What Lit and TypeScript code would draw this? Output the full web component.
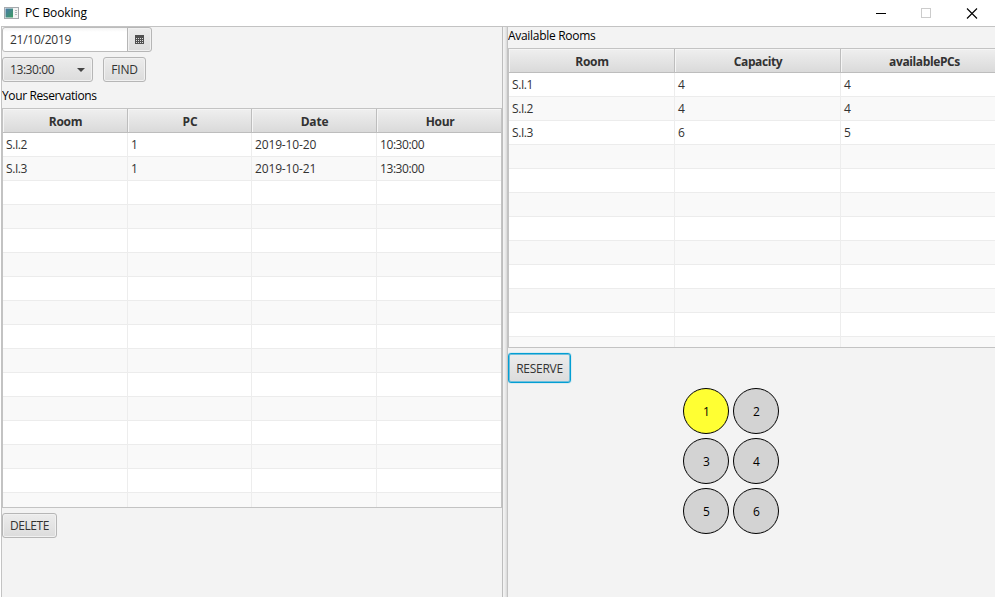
import { LitElement, html, css, svg } from "lit";
import { customElement, property } from "lit/decorators.js";
import { classMap } from "lit/directives/class-map.js";

@customElement("data-table")
class DataTable extends LitElement {
  @property({ attribute: false }) columns: { title: string; width: number; spacing: number }[] = [];
  @property({ attribute: false }) rows: string[][] = [];
  @property({ type: Number }) slots = 16;

  static styles = css`
    :host {
      display: block;
      box-sizing: border-box;
      overflow: hidden;
      background: #fff;
      border: 1px solid #c3c3c3;
      color: #323232;
    }
    .row { display: flex; height: 24px; width: max-content; background: #fff; }
    .row.odd { background: #f9f9f9; }
    .cell {
      box-sizing: border-box;
      flex: none;
      height: 24px;
      padding-left: 3px;
      line-height: 24px;
      border-right: 1px solid #ededed;
      border-bottom: 1px solid #ececec;
      letter-spacing: -0.42px;
      white-space: nowrap;
    }
    .cell.dated { letter-spacing: -0.15px; }
    .header { background: linear-gradient(#efefef, #d9d9d9); }
    .header .cell {
      padding: 0 0 0 1px;
      text-align: center;
      font-weight: 700;
      line-height: 25px;
      border-right-color: #bdbdbd;
      border-bottom-color: #bdbdbd;
      box-shadow: inset 1px 1px 0 #f5f5f5;
    }
  `;

  render() {
    const slots = Array.from({ length: this.slots }, (_, i) => this.rows[i] ?? []);
    return html`
      <div class="row header">
        ${this.columns.map((c) => html`<div class="cell" style="width:${c.width}px;letter-spacing:${c.spacing}px">${c.title}</div>`)}
      </div>
      ${slots.map(
        (r, i) => html`<div class=${classMap({ row: true, odd: i % 2 === 1 })}>
          ${this.columns.map((c, j) => html`<div class=${classMap({ cell: true, dated: c.title === "Date" })} style="width:${c.width}px">${r[j] ?? ""}</div>`)}
        </div>`
      )}
    `;
  }
}

@customElement("app-root")
class AppRoot extends LitElement {
  static styles = css`
    :host {
      display: flex;
      flex-direction: column;
      width: 996px;
      height: 598px;
      overflow: hidden;
      background: #fff;
      color: #000;
      font: 12px/16px "Open Sans", "Noto Sans", sans-serif;
    }
    .titlebar { display: flex; height: 26px; align-items: center; padding-left: 4px; box-sizing: border-box; flex: none; }
    .title { margin-left: 6px; letter-spacing: -0.14px; flex: 1; }
    svg { display: block; flex: none; }
    .split { display: flex; height: 571px; margin: 0 1px; background: #f3f3f3; }
    .pane { box-sizing: border-box; height: 571px; border-top: 1px solid #c3c3c3; border-left: 1px solid #c3c3c3; overflow: hidden; }
    .left { width: 502px; border-right: 1px solid #bdbdbd; }
    .divider { width: 4px; border-top: 1px solid #c3c3c3; box-sizing: border-box; background: linear-gradient(90deg, #f4f4f4, #ececec 50%, #d8d8d8); }
    .right { width: 488px; }
    .label { letter-spacing: -0.38px; white-space: nowrap; }
    .rooms-label { letter-spacing: -0.3px; }
    .button, .combo {
      box-sizing: border-box;
      height: 25px;
      border: 1px solid #b6b6b6;
      border-radius: 3px;
      background: linear-gradient(#ececec, #dcdcdc);
      box-shadow: inset 0 0 0 1px #f1f1f1;
      color: #333;
      line-height: 24px;
      text-align: center;
      letter-spacing: -0.42px;
    }
    .date { display: flex; width: 150px; height: 25px; }
    .field {
      box-sizing: border-box;
      width: 126px;
      border: 1px solid #bcbcbc;
      border-radius: 3px 0 0 3px;
      background: linear-gradient(#f4f4f4, #fff 4px);
      padding-left: 7px;
      line-height: 24px;
      color: #323232;
      letter-spacing: -0.25px;
    }
    .calendar { width: 25px; margin-left: -1px; border-radius: 0 3px 3px 0; display: flex; align-items: center; justify-content: center; }
    .filters { display: flex; gap: 10px; margin-top: 5px; }
    .combo { width: 91px; display: flex; align-items: center; justify-content: space-between; padding: 0 7px; }
    .find { width: 43px; letter-spacing: -0.25px; }
    .reservations-label { margin-top: 6px; height: 16px; }
    .reservations { width: 500px; height: 400px; margin-top: 4px; }
    .delete { width: 55px; margin-top: 5px; letter-spacing: -0.42px; }
    .rooms-label { padding-top: 1px; height: 20px; }
    .rooms { width: 500px; height: 300px; }
    .reserve {
      width: 63px;
      height: 30px;
      margin-top: 5px;
      line-height: 29px;
      border-color: #039ed3;
      box-shadow: inset 0 0 0 1px #70bfdc, 0 0 1px #039ed3;
      letter-spacing: -0.28px;
    }
    .seats { display: grid; grid-template-columns: 46px 46px; gap: 4px; margin: 5px 0 0 175px; }
    .seat { box-sizing: border-box; height: 46px; padding-left: 1px; border: 1px solid #000; border-radius: 50%; background: #d3d3d3; text-align: center; line-height: 45px; }
    .seat.chosen { background: #ffff33; }
  `;

  private reservationColumns = [
    { title: "Room", width: 125, spacing: -0.25 },
    { title: "PC", width: 124, spacing: -0.2 },
    { title: "Date", width: 125, spacing: -0.2 },
    { title: "Hour", width: 126, spacing: -0.3 },
  ];
  private reservations = [
    ["S.I.2", "1", "2019-10-20", "10:30:00"],
    ["S.I.3", "1", "2019-10-21", "13:30:00"],
  ];
  private roomColumns = [
    { title: "Room", width: 166, spacing: -0.32 },
    { title: "Capacity", width: 166, spacing: -0.4 },
    { title: "availablePCs", width: 167, spacing: -0.38 },
  ];
  private rooms = [
    ["S.I.1", "4", "4"],
    ["S.I.2", "4", "4"],
    ["S.I.3", "6", "5"],
  ];

  render() {
    return html`
      <div class="titlebar">
        <svg width="15" height="12" viewBox="0 0 15 12">
          <defs>
            <linearGradient id="screen" x2="1" y2="1">
              <stop offset="0" stop-color="#4a79a8" /><stop offset="1" stop-color="#3c9b62" />
            </linearGradient>
          </defs>
          <rect x=".5" y=".5" width="14" height="11" fill="#f4f4f4" stroke="#a5a9ad" />
          <rect x="1.500" y="1.500" width="7.500" height="9" fill="url(#screen)" />
          <path d="M11 3.500h2M11 5.500h2M11 7.500h2" stroke="#b4b8bb" />
        </svg>
        <div class="title">PC Booking</div>
        <svg width="120" height="26" viewBox="0 0 120 26" fill="none">
          <path d="M0 13.500h10" stroke="#000" />
          <rect x="45.500" y="8.500" width="9" height="9" stroke="#ccc" />
          <path d="M91 8.500l10 10m0-10l-10 10" stroke="#000" stroke-width="1.100" />
        </svg>
      </div>
      <div class="split">
        <div class="pane left">
          <div class="date">
            <div class="field">21/10/2019</div>
            <div class="button calendar">
              <svg width="9" height="9" viewBox="0 0 9 9">
                <rect width="9" height="9" fill="#505050" />
                ${[3, 5, 7].map((y) => [1, 3, 5, 7].map((x) => svg`<rect x=${x} y=${y} width="1" height="1" fill="#ddd" />`))}
              </svg>
            </div>
          </div>
          <div class="filters">
            <div class="combo">
              13:30:00
              <svg width="8" height="4" viewBox="0 0 8 4"><path d="M0 0h8L4 4z" fill="#444" /></svg>
            </div>
            <div class="button find">FIND</div>
          </div>
          <div class="label reservations-label">Your Reservations</div>
          <data-table class="reservations" .columns=${this.reservationColumns} .rows=${this.reservations} .slots=${16}></data-table>
          <div class="button delete">DELETE</div>
        </div>
        <div class="divider"></div>
        <div class="pane right">
          <div class="label rooms-label">Available Rooms</div>
          <data-table class="rooms" .columns=${this.roomColumns} .rows=${this.rooms} .slots=${12}></data-table>
          <div class="button reserve">RESERVE</div>
          <div class="seats">
            ${[1, 2, 3, 4, 5, 6].map((n) => html`<div class=${classMap({ seat: true, chosen: n === 1 })}>${n}</div>`)}
          </div>
        </div>
      </div>
    `;
  }
}
